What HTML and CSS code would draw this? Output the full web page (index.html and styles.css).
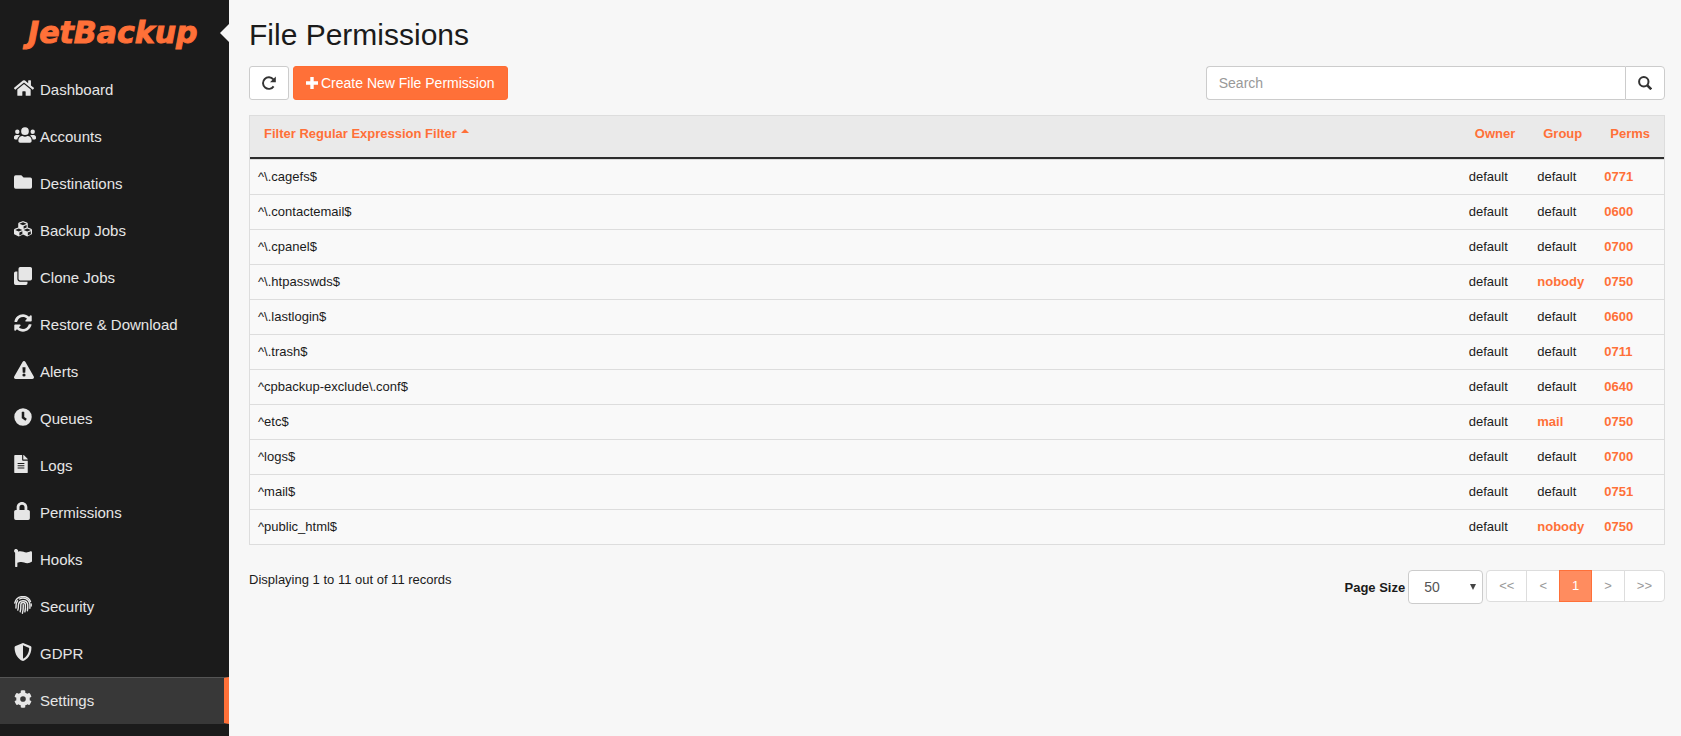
FILE: index.html
```html
<!DOCTYPE html>
<html lang="en">
<head>
<meta charset="utf-8">
<title>File Permissions - JetBackup</title>
<link rel="stylesheet" href="styles.css">
</head>
<body>
<div class="app">
  <aside class="sidebar">
    <div class="brand">
      <a class="logo" href="#">JetBackup</a>
      <span class="notch"></span>
    </div>
    <nav class="menu">
      <a href="#"><span class="icon"><svg width="20" height="18" viewBox="0 0 576 512"><path d="M280.4 148.300L96 300.100V464a16 16 0 0 0 16 16l112-.3a16 16 0 0 0 16-16V368a16 16 0 0 1 16-16h64a16 16 0 0 1 16 16v95.600a16 16 0 0 0 16 16.100l112 .3a16 16 0 0 0 16-16V300L295.700 148.300a12.200 12.200 0 0 0-15.300 0zM571.600 251.500L488 182.600V44a12 12 0 0 0-12-12h-56a12 12 0 0 0-12 12v72.600L318.500 43a48 48 0 0 0-61 0L4.300 251.500a12 12 0 0 0-1.600 16.900l25.500 31a12 12 0 0 0 16.900 1.600L280.400 107.300a12.200 12.200 0 0 1 15.300 0L531 301a12 12 0 0 0 16.900-1.600l25.500-31a12 12 0 0 0-1.800-16.900z"/></svg></span>Dashboard</a>
      <a href="#"><span class="icon"><svg width="22" height="18" viewBox="0 0 640 512"><path d="M96 224a64 64 0 1 0 0-128 64 64 0 0 0 0 128zm448 0a64 64 0 1 0 0-128 64 64 0 0 0 0 128zm32 32h-64c-17.600 0-33.500 7.100-45.100 18.600 40.300 22.100 68.900 62 75.100 109.400h66c17.700 0 32-14.300 32-32v-32c0-35.300-28.700-64-64-64zm-256 0a112 112 0 1 0 0-224 112 112 0 0 0 0 224zm76.800 32h-8.300c-20.800 10-43.900 16-68.500 16s-47.600-6-68.500-16h-8.300C179.600 288 128 339.600 128 403.200V432c0 26.500 21.500 48 48 48h288c26.500 0 48-21.500 48-48v-28.800c0-63.600-51.600-115.200-115.200-115.200zm-223.700-13.400C161.500 263.100 145.600 256 128 256H64c-35.300 0-64 28.700-64 64v32c0 17.700 14.300 32 32 32h65.900c6.300-47.400 34.900-87.300 75.200-109.400z"/></svg></span>Accounts</a>
      <a href="#"><span class="icon"><svg width="18" height="18" viewBox="0 0 512 512"><path d="M464 128H272l-64-64H48a48 48 0 0 0-48 48v288a48 48 0 0 0 48 48h416a48 48 0 0 0 48-48V176a48 48 0 0 0-48-48z"/></svg></span>Destinations</a>
      <a href="#"><span class="icon"><svg width="18" height="18" viewBox="0 0 512 512"><path fill-rule="evenodd" d="M488.600 250.200L392 214V105.500c0-15-9.300-28.400-23.400-33.700l-100-37.500a35 35 0 0 0-25.300 0l-100 37.500C129.300 77.100 120 90.500 120 105.500V214l-96.600 36.200C9.300 255.500 0 269 0 284v98c0 14 7.600 26 20 32l100 50a35 35 0 0 0 32 0l104-52 104 52a35 35 0 0 0 32 0l100-50c12.400-6 20-18 20-32v-98c0-15-9.300-28.500-23.400-33.800zM358 214.800l-85 31.900v-68.200l85-37v73.300zM154 104.100l102-38.200 102 38.200v.6l-102 41.400-102-41.400v-.6zm84 291.100l-85 42.500v-79.100l85-38.800v75.400zm0-112l-102 41.400L34 283.200v-.6l102-38.200 102 38.200v.6zm240 112l-85 42.500v-79.100l85-38.800v75.400zm0-112l-102 41.400-102-41.400v-.6l102-38.200 102 38.200v.6z"/></svg></span>Backup Jobs</a>
      <a href="#"><span class="icon"><svg width="18" height="18" viewBox="0 0 512 512"><path d="M464 0c26.500 0 48 21.500 48 48v288a48 48 0 0 1-48 48H176a48 48 0 0 1-48-48V48a48 48 0 0 1 48-48h288M176 416a80 80 0 0 1-80-80V128H48a48 48 0 0 0-48 48v288a48 48 0 0 0 48 48h288a48 48 0 0 0 48-48v-48H176z"/></svg></span>Clone Jobs</a>
      <a href="#"><span class="icon"><svg width="18" height="18" viewBox="0 0 512 512"><path d="M370.700 133.300C339.500 104 298.900 88 255.800 88c-77.500.1-144.300 53.200-162.800 126.900-1.300 5.400-6.100 9.200-11.700 9.200H24.100c-7.500 0-13.200-6.800-11.800-14.200C33.900 94.900 134.800 8 256 8c66.400 0 126.800 26.100 171.300 68.700L463 41c15.100-15.100 41-4.400 41 17v134c0 13.300-10.700 24-24 24H346c-21.400 0-32.100-25.900-17-41l41.700-41.700zM32 296h134c21.400 0 32.100 25.900 17 41l-41.800 41.800c31.300 29.300 71.900 45.300 115 45.200 77.400-.1 144.300-53.200 162.800-126.800 1.300-5.400 6.100-9.200 11.700-9.200h57.300c7.500 0 13.200 6.800 11.800 14.200C478.100 417.100 377.200 504 256 504c-66.400 0-126.800-26.100-171.300-68.700L49 471c-15.100 15.100-41 4.400-41-17V320c0-13.300 10.700-24 24-24z"/></svg></span>Restore &amp; Download</a>
      <a href="#"><span class="icon"><svg width="20" height="18" viewBox="0 0 576 512"><path fill-rule="evenodd" d="M569.500 440c18.500 32-4.700 72-41.600 72H48.100c-36.900 0-60-40.100-41.600-72L246.400 24c18.500-32 64.700-32 83.200 0l239.900 416zM288 354a46 46 0 1 0 0 92 46 46 0 0 0 0-92zm-43.700-165.300l7.400 136c.4 6.400 5.700 11.300 12 11.300h48.600c6.300 0 11.600-4.900 12-11.300l7.400-136c.4-6.900-5.100-12.700-12-12.700h-63.400c-6.900 0-12.400 5.800-12 12.700z"/></svg></span>Alerts</a>
      <a href="#"><span class="icon"><svg width="18" height="18" viewBox="0 0 512 512"><path fill-rule="evenodd" d="M256 8a248 248 0 1 0 0 496 248 248 0 0 0 0-496zm57.100 350.100L224.900 294a12 12 0 0 1-4.900-9.700V116a12 12 0 0 1 12-12h48a12 12 0 0 1 12 12v137.700l63.500 46.200a12 12 0 0 1 2.600 16.800l-28.200 38.800a12 12 0 0 1-16.800 2.600z"/></svg></span>Queues</a>
      <a href="#"><span class="icon"><svg width="14" height="18" viewBox="0 0 384 512"><path fill-rule="evenodd" d="M224 136V0H24A24 24 0 0 0 0 24v464a24 24 0 0 0 24 24h336a24 24 0 0 0 24-24V160H248a24 24 0 0 1-24-24zM96 224h192v32H96zm0 64h192v32H96zm0 64h192v32H96zM384 122v6H256V0h6a24 24 0 0 1 17 7l98 98a24 24 0 0 1 7 17z"/></svg></span>Logs</a>
      <a href="#"><span class="icon"><svg width="16" height="18" viewBox="0 0 448 512"><path fill-rule="evenodd" d="M400 224h-24v-72C376 68.200 307.800 0 224 0S72 68.200 72 152v72H48a48 48 0 0 0-48 48v192a48 48 0 0 0 48 48h352a48 48 0 0 0 48-48V272a48 48 0 0 0-48-48zm-104 0H152v-72a72 72 0 0 1 144 0v72z"/></svg></span>Permissions</a>
      <a href="#"><span class="icon"><svg width="18" height="18" viewBox="0 0 512 512"><path d="M349.600 98.800C295 98.800 250 64 181.300 64c-25.400 0-48.200 4.500-69.200 12.300A56 56 0 1 0 32 104.600V488a24 24 0 0 0 24 24h16a24 24 0 0 0 24-24v-94.400c28.300-12.100 63.600-22.100 114.400-22.100 54.600 0 99.600 34.800 168.400 34.800 49.100 0 88.300-16.600 124.900-41.600A32 32 0 0 0 512 338V96c0-23.400-24.200-38.800-45.400-29-34.300 15.900-76.300 31.800-117 31.800z"/></svg></span>Hooks</a>
      <a href="#"><span class="icon"><svg width="18" height="18" viewBox="0 0 18 18"><g fill="none" stroke="currentColor" stroke-width="1.400" stroke-linecap="round"><path d="M9.200 8.800c.2 3 0 5.600-.8 8.400"/><path d="M6.200 15.800c.6-2.300.7-4.300.6-6.900a2.300 2.300 0 0 1 4.600-.2c.2 2.600 0 5.200-.5 7.200"/><path d="M3.800 14.100c.5-1.600.7-3.200.6-5.100a4.700 4.700 0 0 1 9.300-.5c.2 2.300 0 4.400-.3 6.200"/><path d="M1.900 12c.3-1.400.1-2.100.2-3.200a7 7 0 0 1 1.500-4M5.500 3a7 7 0 0 1 10.300 4.700c.2 1.600.2 3 .1 4.500"/><path d="M.8 7A8.300 8.300 0 0 1 16.500 5.500M17.200 8v2"/></g></svg></span>Security</a>
      <a href="#"><span class="icon"><svg width="18" height="18" viewBox="0 0 512 512"><path fill-rule="evenodd" d="M466.500 83.700l-192-80a48 48 0 0 0-36.900 0l-192 80A48 48 0 0 0 16 128c0 198.500 114.500 335.700 221.500 380.300a48 48 0 0 0 36.900 0C360.100 472.600 496 349.300 496 128a48 48 0 0 0-29.500-44.300zM256.100 446.300L256 65.900l175.900 73.300c-3.300 151.400-82.100 261.100-175.800 307.100z"/></svg></span>GDPR</a>
      <a class="active" href="#" aria-current="page"><span class="icon"><svg width="18" height="18" viewBox="0 0 512 512"><path fill-rule="evenodd" d="M487.400 315.700l-42.600-24.600c4.300-23.200 4.300-47 0-70.200l42.600-24.600c4.900-2.800 7.100-8.600 5.500-14-11.100-35.600-30-67.800-54.700-94.600-3.800-4.100-10-5.100-14.800-2.300L380.800 110c-17.900-15.400-38.500-27.300-60.800-35.100V25.800c0-5.600-3.900-10.500-9.400-11.700-36.700-8.200-74.300-7.800-109.200 0-5.500 1.200-9.400 6.100-9.400 11.700V75c-22.200 7.900-42.800 19.800-60.800 35.100L88.700 85.500c-4.900-2.800-11-1.900-14.800 2.300-24.700 26.700-43.600 58.900-54.700 94.600-1.700 5.400.6 11.200 5.500 14L67.300 221c-4.300 23.200-4.300 47 0 70.200l-42.600 24.600c-4.900 2.800-7.100 8.600-5.500 14 11.100 35.600 30 67.800 54.700 94.600 3.800 4.100 10 5.100 14.800 2.300l42.600-24.600c17.900 15.400 38.500 27.300 60.800 35.100v49.200c0 5.600 3.900 10.500 9.400 11.700 36.700 8.200 74.300 7.800 109.200 0 5.500-1.200 9.400-6.100 9.400-11.700v-49.200c22.200-7.900 42.800-19.800 60.800-35.100l42.600 24.600c4.900 2.800 11 1.900 14.800-2.300 24.700-26.700 43.600-58.900 54.700-94.600 1.500-5.500-.7-11.300-5.600-14.100zM256 336a80 80 0 1 1 0-160 80 80 0 0 1 0 160z"/></svg></span>Settings</a>
    </nav>
  </aside>

  <main class="content">
    <h1>File Permissions</h1>
    <div class="toolbar">
      <div class="actions">
        <button class="btn" type="button" aria-label="Refresh"><svg width="14" height="14" viewBox="0 0 14 14"><path d="M11.300 3.400A5.800 5.800 0 1 0 11.600 10.400" fill="none" stroke="currentColor" stroke-width="1.900"/><path d="M13.800.4v5.800H8z" fill="currentColor"/></svg></button>
        <button class="btn btn-primary" type="button"><svg width="12" height="12" viewBox="0 0 12 12"><path d="M4.300 0h3.400v4.300H12v3.400H7.700V12H4.300V7.700H0V4.300h4.300z"/></svg>Create New File Permission</button>
      </div>
      <form class="search">
        <input type="text" placeholder="Search" aria-label="Search">
        <button class="btn" type="button" aria-label="Run search"><svg width="14" height="14" viewBox="0 0 14 14"><g fill="none" stroke="currentColor"><circle cx="5.800" cy="5.800" r="4.700" stroke-width="2"/><path d="M9.300 9.300l4 4" stroke-width="2.600"/></g></svg></button>
      </form>
    </div>

    <table class="records">
      <thead>
        <tr><th class="wide"><a href="#">Filter Regular Expression Filter <span class="caret"></span></a></th><th><a href="#">Owner</a></th><th><a href="#">Group</a></th><th><a href="#">Perms</a></th></tr>
      </thead>
      <tbody>
        <tr><td>^\.cagefs$</td><td>default</td><td>default</td><td><b>0771</b></td></tr>
        <tr><td>^\.contactemail$</td><td>default</td><td>default</td><td><b>0600</b></td></tr>
        <tr><td>^\.cpanel$</td><td>default</td><td>default</td><td><b>0700</b></td></tr>
        <tr><td>^\.htpasswds$</td><td>default</td><td><b>nobody</b></td><td><b>0750</b></td></tr>
        <tr><td>^\.lastlogin$</td><td>default</td><td>default</td><td><b>0600</b></td></tr>
        <tr><td>^\.trash$</td><td>default</td><td>default</td><td><b>0711</b></td></tr>
        <tr><td>^cpbackup-exclude\.conf$</td><td>default</td><td>default</td><td><b>0640</b></td></tr>
        <tr><td>^etc$</td><td>default</td><td><b>mail</b></td><td><b>0750</b></td></tr>
        <tr><td>^logs$</td><td>default</td><td>default</td><td><b>0700</b></td></tr>
        <tr><td>^mail$</td><td>default</td><td>default</td><td><b>0751</b></td></tr>
        <tr><td>^public_html$</td><td>default</td><td><b>nobody</b></td><td><b>0750</b></td></tr>
      </tbody>
    </table>

    <footer class="table-footer">
      <p>Displaying 1 to 11 out of 11 records</p>
      <div class="paging">
        <label for="page-size">Page Size</label>
        <span class="select"><select id="page-size"><option>50</option></select></span>
        <nav class="pages" aria-label="Pages">
          <a href="#">&lt;&lt;</a><a href="#">&lt;</a><a class="current" href="#" aria-current="page">1</a><a href="#">&gt;</a><a href="#">&gt;&gt;</a>
        </nav>
      </div>
    </footer>
  </main>
</div>
</body>
</html>
```
FILE: styles.css
```css
* { box-sizing: border-box; }

body {
  margin: 0;
  background: #f7f7f7;
  color: #1b1b1b;
  font: 13px/18px "Liberation Sans", Arial, sans-serif;
}

a { color: inherit; text-decoration: none; }
svg { display: block; fill: currentColor; }
button, input, select { font: inherit; margin: 0; }

.app { display: flex; min-height: 100vh; }

.sidebar {
  flex: none;
  width: 229px;
  background: #1b1b1b;
  color: #e6e6e6;
}
.brand {
  display: flex;
  align-items: center;
  justify-content: space-between;
  height: 66px;
  padding-left: 28px;
}
.logo {
  color: #ff7038;
  font: italic bold 30px/36px "DejaVu Sans", sans-serif;
  -webkit-text-stroke: 1px currentColor;
}
.notch {
  border: 9px solid transparent;
  border-left: 0;
  border-right-color: #f7f7f7;
}
.menu a {
  display: flex;
  align-items: center;
  height: 47px;
  padding-left: 14px;
  border-top: 1px solid transparent;
  border-bottom: 1px solid transparent;
  font-size: 15px;
}
.menu .icon { width: 26px; padding-bottom: 4px; }
.menu .active {
  background: #383838;
  border-top-color: #555;
  border-right: 5px solid #ff7038;
}

.content { flex: 1; min-width: 0; padding: 17px 16px 16px 20px; }
h1 { margin: 0 0 14px; font-size: 30px; line-height: 35px; font-weight: 400; }

.toolbar { display: flex; justify-content: space-between; margin-bottom: 15px; }
.actions { display: flex; gap: 4px; }
.btn {
  display: flex;
  align-items: center;
  gap: 3px;
  height: 34px;
  padding: 0 12px;
  border: 1px solid #ccc;
  border-radius: 3px;
  background: #fff;
  color: #333;
  font-size: 14px;
}
.btn-primary { background: #ff7038; border-color: #ff6c32; color: #fff; }
.search { display: flex; width: calc(33% - 8px); }
.search input {
  flex: 1;
  min-width: 0;
  padding: 0 12px;
  border: 1px solid #ccc;
  border-right: 0;
  border-radius: 4px 0 0 4px;
  background: #fff;
  font-size: 14px;
}
.search input::placeholder { color: #999; }
.search .btn { border-radius: 0 4px 4px 0; }

.records {
  width: 100%;
  border: 1px solid #ddd;
  border-collapse: separate;
  border-spacing: 0;
  background: #f9f9f9;
}
.records th {
  padding: 9px 14px 14px;
  border-bottom: 2px solid #2d2d2d;
  background: #eaeaea;
  text-align: left;
  white-space: nowrap;
}
.records .wide { width: 100%; }
.records th, .records b { color: #ff7038; }
.records td { padding: 8px; border-top: 1px solid #ddd; }
.caret {
  display: inline-block;
  border: 4px solid transparent;
  border-top: 0;
  border-bottom-color: currentColor;
  vertical-align: 5px;
}

.table-footer { display: flex; justify-content: space-between; padding-top: 25px; }
.table-footer p { margin: 0; padding-top: 1px; }
.paging { display: flex; gap: 3px; align-items: flex-start; }
.paging label { padding-top: 9px; font-weight: 700; }
.select { position: relative; }
.select::after {
  content: "";
  position: absolute;
  top: 14px;
  right: 7px;
  border: 3px solid transparent;
  border-top: 6px solid #444;
  border-bottom: 0;
  pointer-events: none;
}
.select select {
  appearance: none;
  width: 75px;
  height: 34px;
  padding: 0 15px;
  border: 1px solid #ccc;
  border-radius: 4px;
  background: #fff;
  color: #555;
  font-size: 14px;
}
.pages { display: flex; }
.pages a {
  padding: 6px 12px;
  border: 1px solid #ddd;
  background: #fff;
  color: #999;
}
.pages a + a { margin-left: -1px; }
.pages a:first-child { border-radius: 4px 0 0 4px; }
.pages a:last-child { border-radius: 0 4px 4px 0; }
.pages .current {
  z-index: 1;
  background: #ff8c5f;
  border-color: #ff7038;
  color: #fff;
}
```
